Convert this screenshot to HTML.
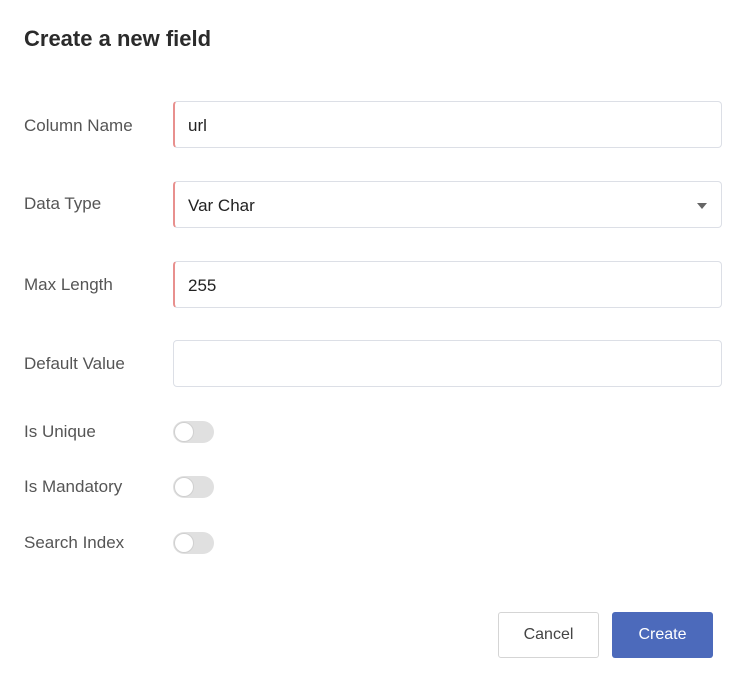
<!DOCTYPE html>
<html><head><style>
body{margin:0;width:747px;height:682px;background:#fff;font-family:"Liberation Sans",sans-serif;position:relative;overflow:hidden}
.t{position:absolute;left:24px;top:26px;font-size:22px;font-weight:bold;color:#2b2b2b}
.l{position:absolute;left:24px;font-size:17px;color:#555}
.in{position:absolute;left:173px;width:549px;height:47px;border:1px solid #dcdfe6;border-radius:4px;box-sizing:border-box;font-size:17px;color:#222;line-height:47px;padding-left:13px}
.in.r{border-left:2px solid #e8908e}
.tg{position:absolute;left:173px;width:41px;height:22px;border-radius:11px;background:#e0e0e0}
.tg:after{content:"";position:absolute;left:1px;top:1px;width:18px;height:18px;border-radius:50%;background:#fff;border:1px solid #d0d0d0}
.b{position:absolute;top:612px;width:101px;height:46px;border-radius:3px;box-sizing:border-box;font-size:16px;text-align:center;line-height:44px}
</style></head><body>
<div class="t">Create a new field</div>
<div class="l" style="top:116px">Column Name</div>
<div class="in r" style="top:101px">url</div>
<div class="l" style="top:194px">Data Type</div>
<div class="in r" style="top:181px">Var Char<span style="position:absolute;right:14px;top:21px;width:0;height:0;border-left:5px solid transparent;border-right:5px solid transparent;border-top:6px solid #666"></span></div>
<div class="l" style="top:275px">Max Length</div>
<div class="in r" style="top:261px">255</div>
<div class="l" style="top:354px">Default Value</div>
<div class="in" style="top:340px"></div>
<div class="l" style="top:422px">Is Unique</div>
<div class="tg" style="top:421px"></div>
<div class="l" style="top:477px">Is Mandatory</div>
<div class="tg" style="top:476px"></div>
<div class="l" style="top:533px">Search Index</div>
<div class="tg" style="top:532px"></div>
<div class="b" style="left:498px;border:1px solid #d5d5d5;color:#444">Cancel</div>
<div class="b" style="left:612px;background:#4c6abb;color:#fff;line-height:46px">Create</div>
</body></html>
